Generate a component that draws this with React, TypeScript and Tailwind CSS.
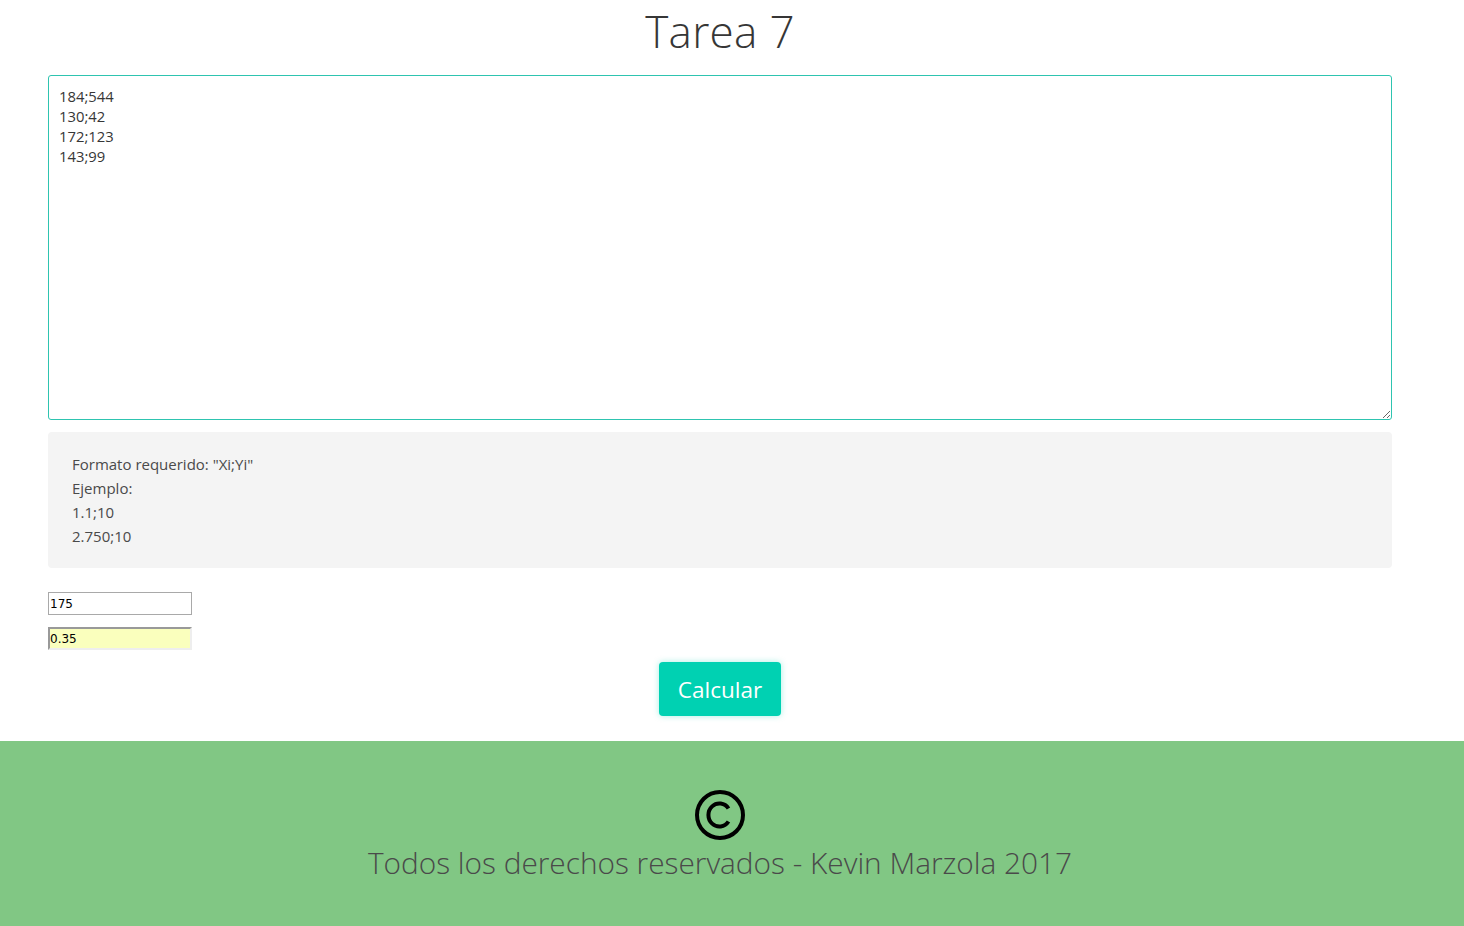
import React from "react";

export default function App() {
  const font = { fontFamily: '"Open Sans", "Noto Sans", sans-serif' };
  return (
    <div className="min-h-[926px] bg-white flex flex-col" style={font}>
      <div className="w-[1440px] flex flex-col">
        <h1 className="text-center text-[44px] leading-[54px] font-light text-[#363636] pt-[4px] tracking-[0.3px]">
          Tarea 7
        </h1>
        <div className="px-12 pt-[17px] flex flex-col">
          <textarea
            className="w-full h-[345px] border border-[#2ec4b0] rounded-[3px] px-[10px] pt-[10px] pb-[10px] text-[14.8px] leading-[20px] text-[#363636] outline-none resize-y"
            defaultValue={"184;544\n130;42\n172;123\n143;99"}
          />
          <div className="mt-[12px] bg-[#f4f4f4] rounded-[4px] px-6 py-5 text-[15px] leading-[24px] text-[#4a4a4a]">
            <div>Formato requerido: "Xi;Yi"</div>
            <div>Ejemplo:</div>
            <div>1.1;10</div>
            <div>2.750;10</div>
          </div>
          <div className="mt-6 flex flex-col gap-3 items-start">
            <input
              className="w-[144px] h-[23px] border border-[#a9a9a9] px-[1px] text-[12px] text-black outline-none"
              style={{ fontFamily: '"DejaVu Sans", sans-serif' }}
              defaultValue="175"
            />
            <input
              className="w-[144px] h-[23px] border-2 border-t-[#999999] border-l-[#999999] border-r-[#eeeeee] border-b-[#eeeeee] bg-[#faffbd] px-0 text-[12px] text-black outline-none"
              style={{ fontFamily: '"DejaVu Sans", sans-serif' }}
              defaultValue="0.35"
            />
          </div>
          <div className="mt-3 flex justify-center">
            <button className="w-[122px] h-[54px] bg-[#00d1b2] text-white rounded-[4px] text-[22.5px] leading-[30px] pt-[2px] shadow-[0_0_6px_rgba(0,209,178,0.35)]">
              Calcular
            </button>
          </div>
        </div>
      </div>
      <footer className="mt-[25px] h-[185px] bg-[#81c784]">
        <div className="w-[1440px] flex flex-col items-center pt-[49px]">
          <svg width="50" height="50" viewBox="0 0 50 50" fill="none">
            <circle cx="25" cy="25" r="23" stroke="black" strokeWidth="4" />
            <path
              d="M33.5 18.5 A 11 11.5 0 1 0 33.5 31.5"
              stroke="black"
              strokeWidth="4"
              fill="none"
            />
          </svg>
          <p className="mt-[2px] text-[29.8px] leading-[42px] font-light text-[#4a4a4a]">
            Todos los derechos reservados - Kevin Marzola 2017
          </p>
        </div>
      </footer>
    </div>
  );
}
